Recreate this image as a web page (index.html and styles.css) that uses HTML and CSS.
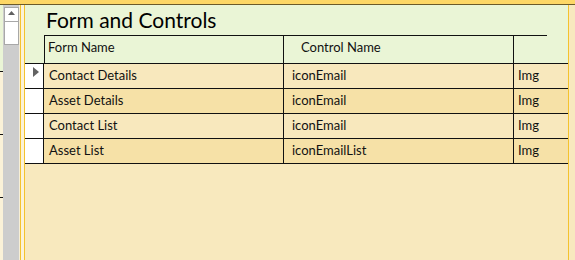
FILE: index.html
```html
<!DOCTYPE html>
<html>
<head>
<meta charset="utf-8">
<link rel="stylesheet" href="styles.css">
</head>
<body>
<div class="top"></div>
<div class="main">
  <div class="edge">
    <div class="e e1"></div>
    <div class="e e2"></div>
    <div class="e e3"></div>
  </div>
  <div class="scroll">
    <div class="btn"><svg width="7" height="4" viewBox="0 0 7 4"><polygon points="0,4 3.5,0 7,4" fill="#606060"/></svg></div>
    <div class="thumb"></div>
  </div>
  <div class="gap"></div>
  <div class="frame">
    <div class="form">
      <div class="head">
        <h1 class="title">Form and Controls</h1>
        <div class="colhead">
          <div class="ch ch1">Form Name</div>
          <div class="ch ch2">Control Name</div>
          <div class="ch ch3"></div>
        </div>
      </div>
      <div class="rows">
        <div class="row">
          <div class="sel"><svg width="6" height="10" viewBox="0 0 6 10"><polygon points="0,0 6,5 0,10" fill="#636363"/></svg></div>
          <div class="c c1">Contact Details</div>
          <div class="c c2">iconEmail</div>
          <div class="c c3">Img</div>
        </div>
        <div class="row alt">
          <div class="sel"></div>
          <div class="c c1">Asset Details</div>
          <div class="c c2">iconEmail</div>
          <div class="c c3">Img</div>
        </div>
        <div class="row">
          <div class="sel"></div>
          <div class="c c1">Contact List</div>
          <div class="c c2">iconEmail</div>
          <div class="c c3">Img</div>
        </div>
        <div class="row alt">
          <div class="sel"></div>
          <div class="c c1">Asset List</div>
          <div class="c c2">iconEmailList</div>
          <div class="c c3">Img</div>
        </div>
      </div>
    </div>
  </div>
  <div class="rline"></div>
  <div class="rpad"></div>
</div>
</body>
</html>
```
FILE: styles.css
```css
* { box-sizing: border-box; }
html, body { margin: 0; padding: 0; }
body {
  width: 575px;
  height: 260px;
  overflow: hidden;
  background: #f8e9be;
  font-family: Lato, "Open Sans", sans-serif;
  color: #111;
}
.top {
  height: 5px;
  background: #fdd766;
  border-bottom: 1px solid #6b5a2a;
}
.main {
  display: flex;
  height: 255px;
}
.edge {
  width: 3px;
  display: flex;
  flex-direction: column;
  background: #fbf2d8;
}
.e { border-bottom: 1px solid #111; }
.e1 { height: 67px; background: #eaf5d6; }
.e2 { height: 63px; }
.e3 { height: 63px; }
.scroll {
  width: 16px;
  background: #cdcdcd;
  padding: 2px 0 0 1px;
}
.btn {
  width: 15px;
  height: 15px;
  background: #fff;
  border: 1px solid #a8a8a8;
  display: flex;
  justify-content: center;
  padding-top: 3px;
}
.btn svg { display: block; }
.thumb {
  width: 15px;
  height: 23px;
  background: #fff;
  border: 1px solid #a8a8a8;
  border-top: none;
}
.gap { width: 1px; background: #f7efd6; }
.frame {
  width: 548px;
  border-left: 1px solid #f4c22e;
  padding-left: 3px;
  background: #fbf2d8;
}
.form {
  height: 100%;
  border-left: 1px solid #f4c22e;
  background: #f8e9be;
}
.head {
  height: 59px;
  background: #eaf5d6;
  border-bottom: 1px solid #111;
}
.title {
  margin: 0;
  height: 30px;
  line-height: 30px;
  padding-left: 21px;
  font-size: 21px;
  font-weight: normal;
  color: #000;
}
.colhead {
  display: grid;
  grid-template-columns: 240px 230px 33px;
  margin-left: 19px;
  height: 28px;
}
.ch {
  border-top: 1px solid #111;
  font-size: 13px;
  line-height: 16px;
  padding-top: 3px;
}
.ch1 { border-left: 1px solid #111; border-right: 1px solid #111; padding-left: 3px; }
.ch2 { border-right: 1px solid #111; padding-left: 17px; }
.rows { display: flex; flex-direction: column; }
.row {
  display: grid;
  grid-template-columns: 19px 240px 230px 54px;
  height: 25px;
  border-bottom: 1px solid #111;
  background: #f8e8bd;
}
.row.alt { background: #f6e1a7; }
.sel {
  background: #fff;
  border-right: 1px solid #111;
  padding: 3px 0 0 8px;
}
.sel svg { display: block; }
.c {
  font-size: 13px;
  line-height: 22px;
  white-space: nowrap;
}
.c1 { border-right: 1px solid #111; padding-left: 5px; }
.c2 { border-right: 1px solid #111; padding-left: 8px; }
.c3 { padding-left: 4px; }
.rline { width: 1px; background: #f4c22e; }
.rpad { width: 6px; background: #f8e9be; }
```
